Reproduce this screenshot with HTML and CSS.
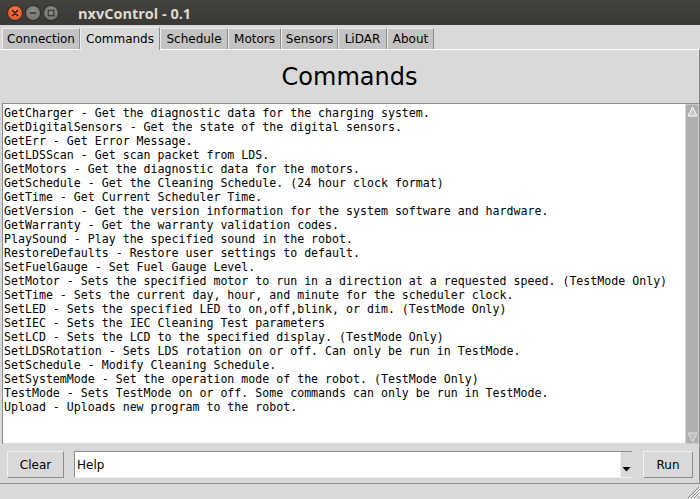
FILE: index.html
```html
<!DOCTYPE html>
<html>
<head>
<meta charset="utf-8">
<link rel="stylesheet" href="styles.css">
</head>
<body>
<div class="window">
  <div class="titlebar">
    <div class="wbtns">
      <span class="wbtn close"><svg width="14" height="14" viewBox="0 0 14 14"><path d="M4.5 4.5 L9.5 9.5 M9.5 4.5 L4.5 9.5" stroke="#3c1a0e" stroke-width="1.6" stroke-linecap="round"/></svg></span>
      <span class="wbtn"><svg width="14" height="14" viewBox="0 0 14 14"><path d="M4 7 H10" stroke="#3a3935" stroke-width="1.6"/></svg></span>
      <span class="wbtn"><svg width="14" height="14" viewBox="0 0 14 14"><rect x="4.3" y="4.3" width="5.4" height="5.4" fill="none" stroke="#3a3935" stroke-width="1.3"/></svg></span>
    </div>
    <div class="title">nxvControl - 0.1</div>
  </div>
  <div class="tabs">
    <div class="tab w-conn">Connection</div>
    <div class="tab sel w-cmd">Commands</div>
    <div class="tab w-sch">Schedule</div>
    <div class="tab w-mot">Motors</div>
    <div class="tab w-sen">Sensors</div>
    <div class="tab w-lid">LiDAR</div>
    <div class="tab w-abt">About</div>
  </div>
  <div class="frame">
    <div class="heading">Commands</div>
    <div class="textwrap">
      <div class="text">GetCharger - Get the diagnostic data for the charging system.
GetDigitalSensors - Get the state of the digital sensors.
GetErr - Get Error Message.
GetLDSScan - Get scan packet from LDS.
GetMotors - Get the diagnostic data for the motors.
GetSchedule - Get the Cleaning Schedule. (24 hour clock format)
GetTime - Get Current Scheduler Time.
GetVersion - Get the version information for the system software and hardware.
GetWarranty - Get the warranty validation codes.
PlaySound - Play the specified sound in the robot.
RestoreDefaults - Restore user settings to default.
SetFuelGauge - Set Fuel Gauge Level.
SetMotor - Sets the specified motor to run in a direction at a requested speed. (TestMode Only)
SetTime - Sets the current day, hour, and minute for the scheduler clock.
SetLED - Sets the specified LED to on,off,blink, or dim. (TestMode Only)
SetIEC - Sets the IEC Cleaning Test parameters
SetLCD - Sets the LCD to the specified display. (TestMode Only)
SetLDSRotation - Sets LDS rotation on or off. Can only be run in TestMode.
SetSchedule - Modify Cleaning Schedule.
SetSystemMode - Set the operation mode of the robot. (TestMode Only)
TestMode - Sets TestMode on or off. Some commands can only be run in TestMode.
Upload - Uploads new program to the robot.</div>
      <div class="scrollbar">
        <div class="arrow"><svg width="11" height="11" viewBox="0 0 11 11"><path d="M5.5 1 L10 10 H1 Z" fill="#c8c8c8" stroke="#ffffff" stroke-width="1"/></svg></div>
        <div class="track"></div>
        <div class="arrow"><svg width="11" height="11" viewBox="0 0 11 11"><path d="M5.5 10 L10 1 H1 Z" fill="#bdbdbd" stroke="#e0e0e0" stroke-width="1"/></svg></div>
      </div>
    </div>
    <div class="controls">
      <div class="btn clear">Clear</div>
      <div class="combo">
        <span class="combotext">Help</span>
        <span class="dd"><svg width="9" height="6" viewBox="0 0 9 6"><path d="M0.5 1 H8.5 L4.5 5.5 Z" fill="#000"/></svg></span>
      </div>
      <div class="btn run">Run</div>
    </div>
  </div>
  <div class="status">
    <svg class="grip" width="14" height="14" viewBox="0 0 14 14">
      <path d="M13 2 L2 13 M13 5 L5 13 M13 8 L8 13 M13 11 L11 13" stroke="#8a8a8a" stroke-width="1"/>
      <path d="M14 3 L3 14 M14 6 L6 14 M14 9 L9 14" stroke="#ffffff" stroke-width="1"/>
    </svg>
  </div>
</div>
</body>
</html>
```
FILE: styles.css
```css
html, body {
  margin: 0;
  padding: 0;
}
body {
  width: 700px;
  height: 499px;
  overflow: hidden;
  background: #d9d9d9;
  font-family: "DejaVu Sans", sans-serif;
}
.window {
  width: 700px;
  height: 499px;
  display: flex;
  flex-direction: column;
}
.titlebar {
  height: 25px;
  background: linear-gradient(#43423e, #3a3935);
  display: flex;
  align-items: center;
  flex-shrink: 0;
}
.wbtns {
  display: flex;
  gap: 4px;
  padding-left: 8px;
  padding-top: 1px;
}
.wbtn {
  width: 14px;
  height: 14px;
  border-radius: 50%;
  background: radial-gradient(circle at 50% 35%, #8f8d88, #6e6c67);
  box-shadow: 0 0 0 1px #2e2d2a;
  display: flex;
}
.wbtn.close {
  background: radial-gradient(circle at 50% 35%, #f7784a, #e2481c);
}
.title {
  margin-left: 20px;
  color: #dfdbd2;
  font-family: "Open Sans", sans-serif;
  font-weight: 700;
  font-size: 14.5px;
  padding-top: 1px;
}
.tabs {
  height: 24px;
  display: flex;
  align-items: flex-end;
  padding-left: 2px;
  flex-shrink: 0;
}
.tab {
  height: 21px;
  box-sizing: border-box;
  background: #c3c3c3;
  border-top: 1px solid #ececec;
  border-left: 1px solid #ececec;
  border-right: 1px solid #8c8c8c;
  font-size: 12px;
  line-height: 20px;
  color: #000;
  text-align: center;
  white-space: nowrap;
}
.w-conn { width: 78px; }
.w-cmd { width: 80px; }
.w-sch { width: 68px; }
.w-mot { width: 53px; }
.w-sen { width: 57px; }
.w-lid { width: 49px; }
.w-abt { width: 47px; }
.tab.sel {
  background: #d9d9d9;
  height: 23px;
  line-height: 22px;
  position: relative;
  top: 1px;
  z-index: 1;
}
.frame {
  flex: 1;
  border-top: 1px solid #ffffff;
  border-right: 1px solid #8c8c8c;
  border-bottom: 1px solid #8c8c8c;
  display: flex;
  flex-direction: column;
}
.heading {
  height: 53px;
  display: flex;
  align-items: center;
  justify-content: center;
  font-size: 24px;
  color: #000;
  padding-top: 1px;
  box-sizing: border-box;
}
.textwrap {
  height: 341px;
  margin-left: 2px;
  display: grid;
  grid-template-columns: minmax(0, 1fr) 13px;
  box-sizing: border-box;
  border-top: 1px solid #8c8c8c;
  border-left: 1px solid #8c8c8c;
}
.text {
  background: #ffffff;
  white-space: pre;
  font-family: "DejaVu Sans Mono", monospace;
  font-size: 11.6px;
  line-height: 14px;
  padding: 2px 0 0 1px;
  overflow: hidden;
  color: #000;
  border-right: 1px solid #d9d9d9;
  border-bottom: 1px solid #d9d9d9;
}
.scrollbar {
  box-sizing: border-box;
  background: #afafaf;
  display: flex;
  flex-direction: column;
  border-top: 1px solid #c9c9c9;
  border-right: 1px solid #c9c9c9;
  border-bottom: 1px solid #c9c9c9;
}
.arrow {
  height: 12px;
  display: flex;
  align-items: center;
  justify-content: center;
  background: #afafaf;
}
.track {
  flex: 1;
  background: #afafaf;
}
.controls {
  display: flex;
  align-items: center;
  padding: 7px 0 0 7px;
  height: 27px;
}
.btn {
  height: 27px;
  box-sizing: border-box;
  background: #d9d9d9;
  border-top: 1px solid #f2f2f2;
  border-left: 1px solid #f2f2f2;
  border-right: 1px solid #8c8c8c;
  border-bottom: 1px solid #8c8c8c;
  display: flex;
  align-items: center;
  justify-content: center;
  font-size: 12px;
  color: #000;
}
.clear {
  width: 57px;
}
.combo {
  width: 558px;
  height: 27px;
  margin-left: 10px;
  box-sizing: border-box;
  background: #ffffff;
  border-top: 1px solid #8c8c8c;
  border-left: 1px solid #8c8c8c;
  border-bottom: 1px solid #f2f2f2;
  display: flex;
  align-items: center;
}
.combotext {
  flex: 1;
  font-size: 12px;
  padding-left: 2px;
  color: #000;
}
.dd {
  width: 12px;
  height: 25px;
  background: #d9d9d9;
  border-left: 1px solid #f2f2f2;
  display: flex;
  align-items: flex-end;
  justify-content: center;
  padding-bottom: 5px;
  box-sizing: border-box;
}
.run {
  width: 50px;
  margin-left: 11px;
}
.status {
  height: 15px;
  display: flex;
  justify-content: flex-end;
  align-items: flex-end;
  flex-shrink: 0;
}
.grip {
  display: block;
}
```
